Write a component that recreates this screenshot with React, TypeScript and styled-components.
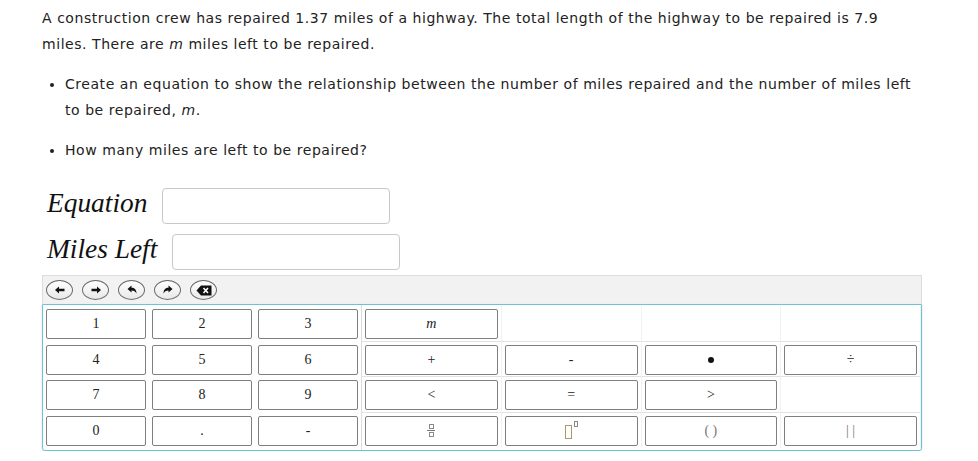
import React from 'react';
import styled, { createGlobalStyle } from 'styled-components';

// Global
const GlobalStyle = createGlobalStyle`
  html, body {
    margin: 0;
    padding: 0;
    background: #ffffff;
  }
`;

// Styled element (Page)
const StyledPage = styled.div`
  padding: 5px 0 0 42px;
  width: 880px;
  font-family: 'DejaVu Sans', Verdana, sans-serif;
  color: #222222;
`;
// Styled element (Prompt)
const StyledPrompt = styled.p`
  font-size: 14px;
  letter-spacing: 0.55px;
  line-height: 26px;
  margin: 0;
  width: 868px;
`;
const StyledList = styled.ul`
  font-size: 14px;
  letter-spacing: 0.55px;
  line-height: 26px;
  margin: 14px 0 0;
  padding-left: 23px;
  width: 848px;
`;
const StyledListItem = styled.li`
  margin-bottom: 14px;
  &:last-child {
    margin-bottom: 0;
  }
`;
// Styled element (Answer row)
const StyledAnswers = styled.div`
  display: flex;
  flex-direction: column;
  gap: 10px;
  margin-top: 25px;
  padding-left: 5px;
`;
const StyledAnswerRow = styled.div`
  align-items: center;
  display: flex;
  gap: 15px;
`;
const StyledAnswerLabel = styled.span`
  color: #111111;
  font-family: 'Liberation Serif', 'Times New Roman', serif;
  font-size: 27.4px;
  font-style: italic;
  line-height: 30px;
  padding-bottom: 6px;
`;
const StyledAnswerInput = styled.div`
  background: #ffffff;
  border: 1px solid #c8c8c8;
  border-radius: 4px;
  box-sizing: border-box;
  height: 36px;
  width: 228px;
`;
// Styled element (Keypad)
const StyledKeypad = styled.div`
  margin-top: 5px;
  width: 880px;
`;
const StyledToolbar = styled.div`
  align-items: center;
  background: #f2f2f2;
  border: 1px solid #dcdcdc;
  border-bottom: none;
  display: flex;
  gap: 9px;
  height: 28px;
  padding: 0 0 0 3px;
`;
const StyledToolButton = styled.span`
  align-items: center;
  background: linear-gradient(#ffffff, #e8e8e8);
  border: 1px solid #6a6a6a;
  border-radius: 50%;
  box-sizing: border-box;
  display: flex;
  height: 20px;
  justify-content: center;
  width: 27px;
`;
const StyledPanel = styled.div`
  border: 1px solid #6cc3d5;
  border-radius: 0 0 3px 3px;
  box-shadow: 0 1px 2px rgba(0, 0, 0, 0.15);
  display: flex;
`;
const StyledNumbers = styled.div`
  border-right: 1px solid #dddddd;
  display: grid;
  grid-template-columns: repeat(3, 106px);
  grid-auto-rows: 35.5px;
  padding: 1px 0 2px;
`;
const StyledSymbols = styled.div`
  display: grid;
  flex: 1;
  grid-template-columns: repeat(4, 1fr);
  grid-auto-rows: 35.5px;
  padding: 1px 0 2px;
`;
const StyledCell = styled.div<{ $lined?: boolean }>`
  border-bottom: ${({ $lined }) => ($lined ? '1px solid #e2e2e2' : 'none')};
  border-right: ${({ $lined }) => ($lined ? '1px solid #f1f1f1' : 'none')};
  box-sizing: border-box;
  display: flex;
  padding: 3px;
  &:nth-last-child(-n + 4) {
    border-bottom: none;
  }
`;
const StyledKey = styled.div<{ $italic?: boolean; $muted?: boolean }>`
  align-items: center;
  background: #ffffff;
  border: 1px solid #7f7f7f;
  border-radius: 2px;
  box-sizing: border-box;
  color: ${({ $muted }) => ($muted ? '#777777' : '#222222')};
  display: flex;
  flex: 1;
  font-family: 'Liberation Serif', 'Times New Roman', serif;
  font-size: 14px;
  font-style: ${({ $italic }) => ($italic ? 'italic' : 'normal')};
  height: 30px;
  justify-content: center;
`;
const StyledDot = styled.span`
  background: #111111;
  border-radius: 50%;
  display: inline-block;
  height: 6px;
  width: 6px;
`;
const StyledFraction = styled.span`
  align-items: center;
  display: inline-flex;
  flex-direction: column;
  gap: 1px;
`;
const StyledTinyBox = styled.span`
  border: 1px solid #888888;
  box-sizing: border-box;
  display: block;
  height: 5px;
  width: 5px;
`;
const StyledBar = styled.span`
  background: #777777;
  display: block;
  height: 1px;
  width: 8px;
`;
const StyledPower = styled.span`
  align-items: flex-start;
  display: inline-flex;
  gap: 2px;
  margin-top: -2px;
`;
const StyledBaseBox = styled.span`
  border: 1.5px solid #a89a6a;
  box-sizing: border-box;
  display: block;
  height: 14px;
  margin-top: 4px;
  width: 7px;
`;
const StyledExpBox = styled.span`
  border: 1px solid #8a8a8a;
  box-sizing: border-box;
  display: block;
  height: 6px;
  width: 4px;
`;

/** Interface */
interface KeyItem {
  content: React.ReactNode;
  italic?: boolean;
  muted?: boolean;
}

// Toolbar icons
const ArrowLeft = (): JSX.Element => (
  <svg width='10' height='8' viewBox='0 0 10 8'>
    <path d='M0 4 L4 0.5 L4 2.8 L9.5 2.8 L9.5 5.2 L4 5.2 L4 7.5 Z' fill='#111' />
  </svg>
);
const ArrowRight = (): JSX.Element => (
  <svg width='10' height='8' viewBox='0 0 10 8'>
    <path d='M10 4 L6 0.5 L6 2.8 L0.5 2.8 L0.5 5.2 L6 5.2 L6 7.5 Z' fill='#111' />
  </svg>
);
const Undo = (): JSX.Element => (
  <svg width='10' height='10' viewBox='0 0 10 10'>
    <path d='M0.5 4 L4.5 0.5 L4.5 2.7 C7.5 2.7 9.5 4.5 9.5 8.5 C8.5 6.5 7 5.4 4.5 5.4 L4.5 7.5 Z' fill='#111' />
  </svg>
);
const Redo = (): JSX.Element => (
  <svg width='10' height='10' viewBox='0 0 10 10'>
    <path d='M9.5 4 L5.5 0.5 L5.5 2.7 C2.5 2.7 0.5 4.5 0.5 8.5 C1.5 6.5 3 5.4 5.5 5.4 L5.5 7.5 Z' fill='#111' />
  </svg>
);
const Backspace = (): JSX.Element => (
  <svg width='16' height='11' viewBox='0 0 16 11'>
    <path d='M0.5 5.5 L5 0.5 L15.5 0.5 L15.5 10.5 L5 10.5 Z' fill='#111' />
    <path d='M7.5 3 L12 8 M12 3 L7.5 8' stroke='#fff' strokeWidth='1.6' />
  </svg>
);

const numberKeys: KeyItem[] = [
  { content: '1' }, { content: '2' }, { content: '3' },
  { content: '4' }, { content: '5' }, { content: '6' },
  { content: '7' }, { content: '8' }, { content: '9' },
  { content: '0' }, { content: '.' }, { content: '-' },
];

const symbolKeys: (KeyItem | null)[] = [
  { content: 'm', italic: true }, null, null, null,
  { content: '+' }, { content: '-' }, { content: <StyledDot /> }, { content: '÷' },
  { content: '<' }, { content: '=' }, { content: '>' }, null,
  {
    content: (
      <StyledFraction>
        <StyledTinyBox />
        <StyledBar />
        <StyledTinyBox />
      </StyledFraction>
    ),
  },
  {
    content: (
      <StyledPower>
        <StyledBaseBox />
        <StyledExpBox />
      </StyledPower>
    ),
  },
  { content: '( )', muted: true },
  { content: '| |', muted: true },
];

// Component (app)
const App = (): JSX.Element => {
  return (
    <>
      <GlobalStyle />
      <StyledPage>
        <StyledPrompt>
          A construction crew has repaired 1.37 miles of a highway. The total length of the highway to be repaired is 7.9 miles. There are <i>m</i> miles left to be repaired.
        </StyledPrompt>
        <StyledList>
          <StyledListItem>
            Create an equation to show the relationship between the number of miles repaired and the number of miles left to be repaired, <i>m</i>.
          </StyledListItem>
          <StyledListItem>How many miles are left to be repaired?</StyledListItem>
        </StyledList>
        <StyledAnswers>
          <StyledAnswerRow>
            <StyledAnswerLabel>Equation</StyledAnswerLabel>
            <StyledAnswerInput />
          </StyledAnswerRow>
          <StyledAnswerRow>
            <StyledAnswerLabel>Miles Left</StyledAnswerLabel>
            <StyledAnswerInput />
          </StyledAnswerRow>
        </StyledAnswers>
        <StyledKeypad>
          <StyledToolbar>
            <StyledToolButton><ArrowLeft /></StyledToolButton>
            <StyledToolButton><ArrowRight /></StyledToolButton>
            <StyledToolButton><Undo /></StyledToolButton>
            <StyledToolButton><Redo /></StyledToolButton>
            <StyledToolButton><Backspace /></StyledToolButton>
          </StyledToolbar>
          <StyledPanel>
            <StyledNumbers>
              {numberKeys.map((key: KeyItem, index: number): JSX.Element => (
                <StyledCell key={index}>
                  <StyledKey>{key.content}</StyledKey>
                </StyledCell>
              ))}
            </StyledNumbers>
            <StyledSymbols>
              {symbolKeys.map((key: KeyItem | null, index: number): JSX.Element => (
                <StyledCell $lined key={index}>
                  {key ? <StyledKey $italic={key.italic} $muted={key.muted}>{key.content}</StyledKey> : null}
                </StyledCell>
              ))}
            </StyledSymbols>
          </StyledPanel>
        </StyledKeypad>
      </StyledPage>
    </>
  );
};

export default App;
